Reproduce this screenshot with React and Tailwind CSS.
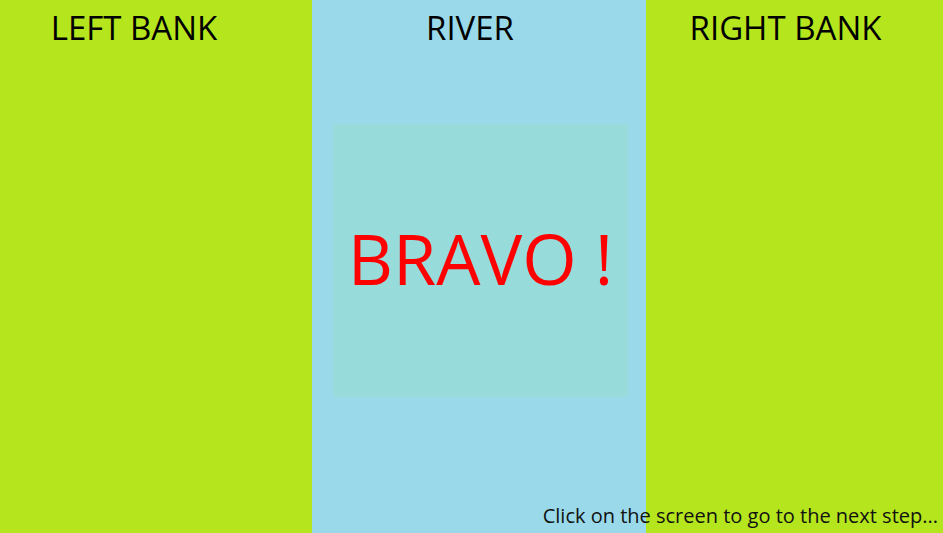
export default function App() {
  const font = { fontFamily: '"Open Sans", sans-serif' };
  return (
    <div className="relative flex h-[533px] w-[943px] overflow-hidden text-black" style={font}>
      <div className="w-[312px] bg-[#b5e61d] pr-[44px] pt-[11px] text-center text-[33px] leading-[33px]">LEFT BANK</div>
      <div className="flex w-[334px] flex-col bg-[#99d9ea]">
        <div className="pr-[18px] pt-[11px] text-center text-[33px] leading-[33px]">RIVER</div>
        <div className="ml-[21px] mt-[80px] flex h-[273px] w-[295px] items-center justify-center bg-[#97dbda] pb-[6px] text-[70px] leading-none text-[#ff0000]">
          BRAVO !
        </div>
      </div>
      <div className="flex-1 bg-[#b5e61d] pr-[18px] pt-[11px] text-center text-[33px] leading-[33px]">RIGHT BANK</div>
      <div className="absolute bottom-[7px] right-[5px] text-[20px] leading-[20px] text-[#111]">
        Click on the screen to go to the next step...
      </div>
    </div>
  );
}
